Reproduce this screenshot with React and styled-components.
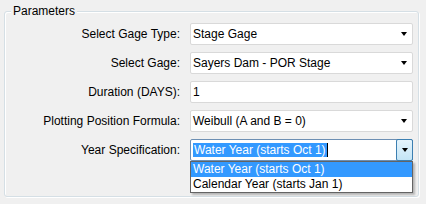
import React from "react";
import styled, { createGlobalStyle } from "styled-components";

const GlobalStyle = createGlobalStyle`
  html, body {
    margin: 0;
    padding: 0;
    background: #f0f0f0;
  }
  body {
    font-family: "Liberation Sans", Arial, sans-serif;
    font-size: 12px;
    color: #000;
  }
`;

// layout

const Page = styled.div`
  width: 426px;
  height: 204px;
  padding: 11px 7px 0 4px;
  box-sizing: border-box;
`;

const GroupBox = styled.div`
  position: relative;
  height: 186px;
  box-sizing: border-box;
  border: 1px solid #d5dfe5;
  border-radius: 3px;
  box-shadow: inset 1px 1px 0 #fff, 1px 1px 0 #fff;
  padding: 11px 0 0 0;
`;

const Legend = styled.div`
  position: absolute;
  top: -8px;
  left: 6px;
  padding: 0 2px;
  background: #f0f0f0;
  font-size: 12px;
  line-height: 15px;
`;

const Form = styled.div`
  display: grid;
  grid-template-columns: 175px 223px;
  column-gap: 10px;
  row-gap: 7px;
  align-items: center;
`;

const Label = styled.div`
  text-align: right;
  line-height: 22px;
  white-space: nowrap;
`;

const Field = styled.div`
  position: relative;
  height: 22px;
  box-sizing: border-box;
  background: #fff;
  border: 1px solid ${p => (p.$focused ? "#6d8fb3" : "#d9d9d9")};
  border-radius: 2px;
  display: flex;
  align-items: center;
  padding-left: 2px;
`;

const Value = styled.span`
  flex: 1;
  line-height: 15px;
  white-space: nowrap;
`;

const Selected = styled.span`
  background: #3399ff;
  color: #fff;
  padding: 0 1px;
  line-height: 15px;
  border-right: 1px solid #000;
`;

const DropButton = styled.div`
  width: 17px;
  align-self: stretch;
  box-sizing: border-box;
  display: flex;
  align-items: center;
  justify-content: center;
  ${p =>
    p.$active &&
    `
    margin: -1px -1px -1px 0;
    border: 1px solid #3c7fb1;
    border-radius: 2px;
    background: linear-gradient(#e5f4fc, #c4e5f6);
  `}
`;

const Arrow = styled.span`
  width: 0;
  height: 0;
  border-left: 3.5px solid transparent;
  border-right: 3.5px solid transparent;
  border-top: 4px solid #000;
  margin-left: 1px;
`;

const List = styled.div`
  position: absolute;
  top: 21px;
  left: -1px;
  right: -1px;
  background: #fff;
  border: 1px solid #646464;
  box-shadow: 2px 2px 2px rgba(0, 0, 0, 0.25);
  z-index: 2;
`;

const Item = styled.div`
  height: 15px;
  line-height: 15px;
  padding-left: 2px;
  background: ${p => (p.$active ? "#3399ff" : "#fff")};
  color: ${p => (p.$active ? "#fff" : "#000")};
`;

//

const Combo = ({ value, focused, children }) => (
  <Field $focused={focused}>
    <Value>{focused ? <Selected>{value}</Selected> : value}</Value>
    <DropButton $active={focused}>
      <Arrow />
    </DropButton>
    {children}
  </Field>
);

export default function App() {
  return (
    <Page>
      <GlobalStyle />
      <GroupBox>
        <Legend>Parameters</Legend>
        <Form>
          <Label>Select Gage Type:</Label>
          <Combo value="Stage Gage" />

          <Label>Select Gage:</Label>
          <Combo value="Sayers Dam - POR Stage" />

          <Label>Duration (DAYS):</Label>
          <Field>
            <Value>1</Value>
          </Field>

          <Label>Plotting Position Formula:</Label>
          <Combo value="Weibull (A and B = 0)" />

          <Label>Year Specification:</Label>
          <Combo value="Water Year (starts Oct 1)" focused>
            <List>
              <Item $active>Water Year (starts Oct 1)</Item>
              <Item>Calendar Year (starts Jan 1)</Item>
            </List>
          </Combo>
        </Form>
      </GroupBox>
    </Page>
  );
}
